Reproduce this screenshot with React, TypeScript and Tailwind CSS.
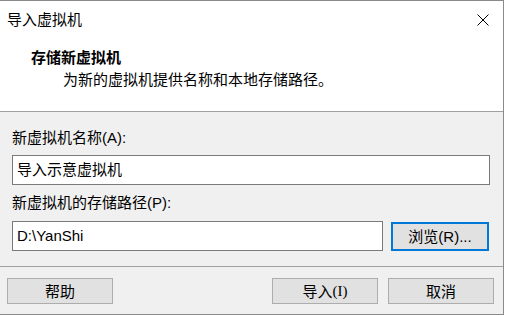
import React from 'react';

const FONT = '"Liberation Sans", "Noto Sans CJK SC", sans-serif';

function CloseIcon() {
  return (
    <svg width="12" height="12" viewBox="0 0 12 12" className="block">
      <path d="M0.5 0.5 L11.5 11.5 M11.5 0.5 L0.5 11.5" stroke="#000" strokeWidth="1" fill="none" />
    </svg>
  );
}

function DlgButton({ children, focused = false, className = '' }: { children: React.ReactNode; focused?: boolean; className?: string }) {
  return (
    <button
      type="button"
      className={
        'flex items-center justify-center bg-[#e1e1e1] text-[15px] leading-none text-black ' +
        (focused ? 'border-2 border-[#0078d7] ' : 'border border-[#adadad] ') +
        className
      }
    >
      {children}
    </button>
  );
}

export default function App() {
  return (
    <div className="w-[511px] h-[315px] bg-white overflow-hidden text-black" style={{ fontFamily: FONT }}>
      <div className="w-[504px] h-[315px] flex flex-col border-t border-r border-b border-[#8a8a8a]">
        {/* Header */}
        <div className="h-[110px] bg-white flex flex-col">
          <div className="h-[38px] flex items-center justify-between pl-[7px] pr-[14px]">
            <span className="text-[15px] leading-[20px]">导入虚拟机</span>
            <CloseIcon />
          </div>
          <div className="mt-[9px] pl-[31px] text-[15px] leading-[20px] font-bold">存储新虚拟机</div>
          <div className="mt-[2px] pl-[63px] text-[15px] leading-[20px]">为新的虚拟机提供名称和本地存储路径。</div>
        </div>
        <div className="h-px bg-[#a0a0a0]" />

        {/* Body */}
        <div className="h-[154px] bg-[#f0f0f0] flex flex-col pl-[12px] pt-[16px]">
          <div className="text-[15px] leading-[20px]">新虚拟机名称(A):</div>
          <div className="mt-[7px] w-[478px] h-[30px] bg-white border border-[#7a7a7a] flex items-center pl-[4px] text-[15px]">
            导入示意虚拟机
          </div>
          <div className="mt-[8px] text-[15px] leading-[20px]">新虚拟机的存储路径(P):</div>
          <div className="mt-[8px] flex items-center">
            <div className="w-[371px] h-[30px] bg-white border border-[#7a7a7a] flex items-center pl-[4px] text-[15px]">
              D:\YanShi
            </div>
            <DlgButton focused className="ml-[8px] w-[98px] h-[29px]">浏览(R)...</DlgButton>
          </div>
        </div>
        <div className="h-px bg-[#a0a0a0]" />

        {/* Footer */}
        <div className="flex-1 bg-[#f0f0f0] flex items-start justify-between pl-[7px] pr-[9px] pt-[11px]">
          <DlgButton className="w-[106px] h-[26px]">帮助</DlgButton>
          <div className="flex gap-[10px]">
            <DlgButton className="w-[106px] h-[26px]">
              导入<span style={{ fontFamily: '"Liberation Serif", serif' }}>(I)</span>
            </DlgButton>
            <DlgButton className="w-[106px] h-[26px]">取消</DlgButton>
          </div>
        </div>
      </div>
    </div>
  );
}
